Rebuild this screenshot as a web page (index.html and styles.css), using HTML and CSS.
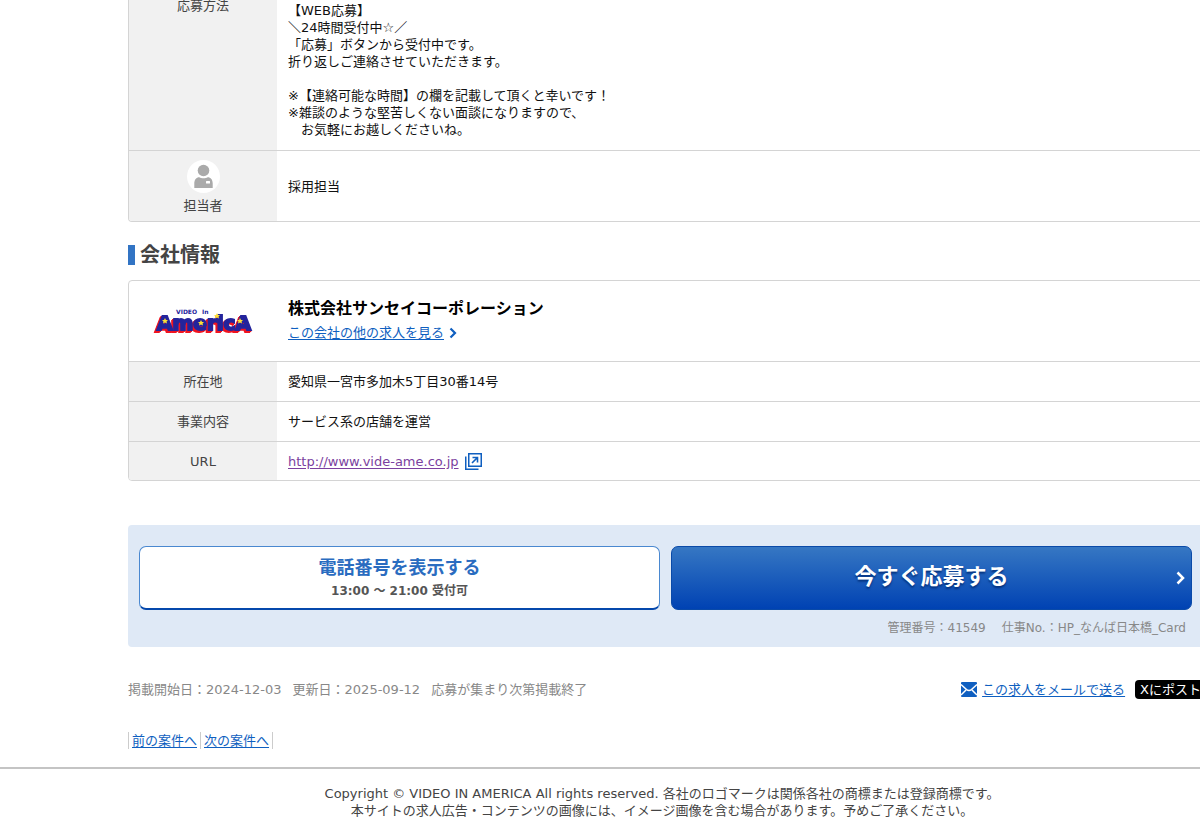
FILE: index.html
```html
<!DOCTYPE html>
<html lang="ja">
<head>
<meta charset="utf-8">
<title>株式会社サンセイコーポレーション</title>
<link rel="stylesheet" href="styles.css">
</head>
<body>
<main class="content">
  <table class="info info--continued">
    <tr class="row-method">
      <th scope="row">応募方法</th>
      <td>【WEB応募】<br>＼24時間受付中☆／<br>「応募」ボタンから受付中です。<br>折り返しご連絡させていただきます。<br><br>※【連絡可能な時間】の欄を記載して頂くと幸いです！<br>※雑談のような堅苦しくない面談になりますので、<br>　お気軽にお越しくださいね。</td>
    </tr>
    <tr class="row-person">
      <th scope="row">
        <svg class="person-icon" viewBox="0 0 33 33" aria-hidden="true">
          <circle cx="16.500" cy="16.500" r="16.500" fill="#fff"/>
          <circle cx="16.500" cy="10.500" r="5.800" fill="#aaa"/>
          <path d="M7.300 28v-4.500c0-4 2-6.300 5-6.300 2 1.300 6.400 1.300 8.400 0 3 0 5 2.300 5 6.300V28z" fill="#aaa"/>
          <rect x="19" y="21" width="4" height="2.500" rx=".5" fill="#fff"/>
        </svg>
        担当者
      </th>
      <td>採用担当</td>
    </tr>
  </table>

  <h2 class="section-title">会社情報</h2>

  <table class="info">
    <tr class="row-company">
      <td class="logo-cell">
        <svg class="logo" viewBox="0 0 100 28" role="img" aria-label="VIDEO In AmericA">
          <text class="logo-main" x="4" y="23">AmericA</text>
          <g class="logo-small">
            <text x="23" y="7">VIDEO</text>
            <text x="49" y="7">In</text>
          </g>
          <g fill="#ffe234">
            <path id="star" d="M12 11l1 2h2l-1.500 1.500.5 2-2-1-2 1 .5-2L9 13h2z"/>
            <use href="#star" x="36" y="2"/>
            <use href="#star" x="52" y="-5"/>
            <use href="#star" x="75"/>
          </g>
        </svg>
      </td>
      <td class="company-cell">
        <p class="company-name">株式会社サンセイコーポレーション</p>
        <a class="more-link" href="#jobs">この会社の他の求人を見る</a>
        <svg class="chevron" viewBox="0 0 8 12" aria-hidden="true"><path d="M1.500 1.500L6 6l-4.500 4.500" fill="none" stroke="#0f5fc0" stroke-width="2.200"/></svg>
      </td>
    </tr>
    <tr><th scope="row">所在地</th><td>愛知県一宮市多加木5丁目30番14号</td></tr>
    <tr><th scope="row">事業内容</th><td>サービス系の店舗を運営</td></tr>
    <tr>
      <th scope="row">URL</th>
      <td><a class="site-link" href="http://www.vide-ame.co.jp">http://www.vide-ame.co.jp</a>
        <svg class="external" viewBox="0 0 17 17" aria-hidden="true" fill="none" stroke="#0f5fc0">
          <path d="M3.750.75h12.500v12.500H3.750z" stroke-width="1.500"/>
          <path d="M.75 3.500v12.750H13.500" stroke-width="1.500"/>
          <path d="M7 10l5-5M7.500 4.500h5v5" stroke-width="1.600"/>
        </svg>
      </td>
    </tr>
  </table>

  <section class="apply">
    <div class="apply-buttons">
      <button class="btn btn-phone" type="button"><span class="btn-phone-title">電話番号を表示する</span><span class="btn-phone-hours">13:00 ～ 21:00 受付可</span></button>
      <button class="btn btn-apply" type="button">今すぐ応募する
        <svg class="btn-arrow" viewBox="0 0 9 14" aria-hidden="true"><path d="M1.500 1.500L7 7l-5.500 5.500" fill="none" stroke="#fff" stroke-width="2.500"/></svg>
      </button>
    </div>
    <p class="apply-meta"><span>管理番号：41549</span><span>仕事No.：HP_なんば日本橋_Card</span></p>
  </section>

  <div class="posting">
    <p class="dates"><span>掲載開始日：2024-12-03</span><span>更新日：2025-09-12</span><span>応募が集まり次第掲載終了</span></p>
    <div class="share">
      <svg class="mail-icon" viewBox="0 0 16 15" aria-hidden="true">
        <rect width="16" height="15" rx="1" fill="#0f5fc0"/>
        <path d="M0 2.500l5.500 5Q8 9.500 10.500 7.500l5.500-5M0 13l5-5M16 13l-5-5" fill="none" stroke="#fff" stroke-width="1.500"/>
      </svg>
      <a href="#mail">この求人をメールで送る</a>
      <a class="x-post" href="#post">Xにポスト</a>
    </div>
  </div>

  <nav class="pager"><a href="#prev">前の案件へ</a><a href="#next">次の案件へ</a></nav>
</main>
<footer class="footer">
  <p>Copyright © VIDEO IN AMERICA All rights reserved. 各社のロゴマークは関係各社の商標または登録商標です。<br>本サイトの求人広告・コンテンツの画像には、イメージ画像を含む場合があります。予めご了承ください。</p>
</footer>
</body>
</html>
```
FILE: styles.css
```css
* { box-sizing: border-box; }
body {
  margin: 0;
  overflow: hidden;
  background: #fff;
  color: #111;
  font: 13px/17px "DejaVu Sans", "Noto Sans CJK JP", sans-serif;
}
p, h2 { margin: 0; }
svg { display: inline-block; }
a { color: #0f5fc0; text-underline-offset: 2px; }

.content { margin: 0 -4px 0 128px; }

.info {
  width: 100%;
  table-layout: fixed;
  border: 1px solid #d4d4d4;
  border-radius: 4px;
  border-spacing: 0;
  overflow: hidden;
}
.info--continued {
  border-top: 0;
  border-top-left-radius: 0;
}
.info th, .info td { height: 40px; padding: 0 11px; border-bottom: 1px solid #d4d4d4; }
.info tr:last-child > * { height: 38px; border-bottom: 0; }
.info th {
  width: 148px;
  background: #f1f1f1;
  color: #444;
  font-weight: 400;
  text-align: center;
}
.info .row-method > * { vertical-align: top; }
.info .row-method th { line-height: 12px; }
.info .row-method td { padding-top: 2px; padding-bottom: 12px; }
.info .row-person:last-child > * { height: 70px; }
.person-icon { display: block; width: 33px; height: 33px; margin: 2px auto 4px; }

.section-title {
  margin: 23px 0 15px;
  padding-left: 5px;
  border-left: 7px solid #3274c4;
  color: #444;
  font-size: 20px;
  line-height: 20px;
}
.info .row-company td { height: 81px; }
.info .company-cell { padding-bottom: 4px; }
.info .logo-cell { width: 148px; padding: 0; text-align: center; }
.logo { width: 100px; height: 28px; vertical-align: middle; }
.logo-main {
  fill: #24249c;
  stroke: #24249c;
  stroke-width: 2px;
  font-size: 20px;
  font-weight: 700;
  filter: drop-shadow(-1px 1px 0 #f01420) drop-shadow(-1px 1px 0 #f01420);
}
.logo-small { fill: #24249c; font-size: 6px; font-weight: 700; }
.company-name { margin-bottom: 4px; font-size: 16px; font-weight: 700; line-height: 22px; color: #000; }
.chevron { width: 8px; height: 12px; margin-left: 1px; vertical-align: -2px; }
.site-link { color: #7b3fa0; }
.external { width: 17px; height: 17px; margin-left: 2px; vertical-align: -4px; }

.apply { margin-top: 44px; padding: 21px 12px 10px 11px; border-radius: 4px; background: #dfe9f6; }
.apply-buttons { display: grid; grid-template-columns: 1fr 1fr; gap: 11px; }
.btn {
  display: flex;
  flex-direction: column;
  align-items: center;
  justify-content: center;
  height: 64px;
  padding: 0;
  border-radius: 7px;
  font-family: inherit;
  font-weight: 700;
  cursor: pointer;
}
.btn-phone { gap: 3px; border: 1px solid #4a88d0; border-bottom: 2px solid #0548ac; background: #fff; color: #2a6cc0; }
.btn-phone-title { font-size: 18px; line-height: 24px; }
.btn-phone-hours { color: #555; font-size: 12px; line-height: 17px; }
.btn-apply {
  position: relative;
  border: 1px solid #0a4aa8;
  background: linear-gradient(#3677c3, #0042b3);
  color: #fff;
  font-size: 22px;
  line-height: 24px;
  padding-bottom: 2px;
  text-shadow: 0 2px 2px #04327e;
}
.btn-arrow { position: absolute; right: 6px; top: 24px; width: 9px; height: 14px; }
.apply-meta { display: flex; justify-content: flex-end; gap: 16px; margin-top: 10px; padding-right: 6px; color: #888; font-size: 12px; }

.posting { display: flex; justify-content: space-between; align-items: center; margin-top: 33px; }
.dates { display: flex; gap: 11px; color: #888; }
.share { display: flex; align-items: center; gap: 5px; }
.mail-icon { width: 16px; height: 15px; }
.x-post {
  margin-left: 5px;
  padding: 1px 3px 1px 5px;
  border-radius: 4px;
  background: #000;
  color: #fff;
  text-decoration: none;
}
.pager { display: flex; margin-top: 33px; border-left: 1px solid #ccc; }
.pager a { padding: 0 3px; border-right: 1px solid #ccc; }

.footer {
  margin-top: 18px;
  padding: 16px 0 0 124px;
  border-top: 2px solid #c4c4c4;
  color: #444;
  text-align: center;
}
```
